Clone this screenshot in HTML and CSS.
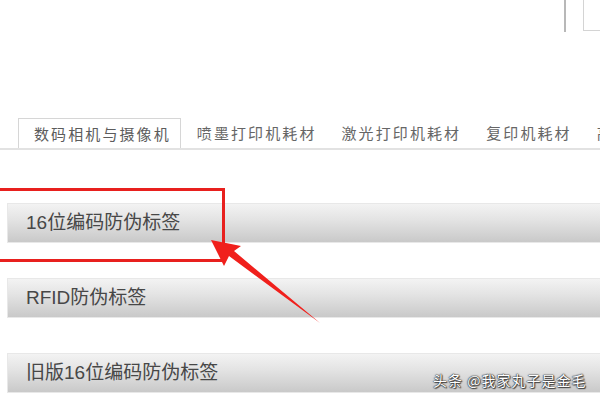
FILE: index.html
```html
<!DOCTYPE html>
<html lang="zh-CN">
<head>
    <meta charset="UTF-8">
    <meta name="viewport" content="width=device-width, initial-scale=1.0">
    <title>防伪标签</title>
    <link rel="stylesheet" href="styles.css">
</head>
<body>

    <div class="top-deco">
        <span class="deco-line"></span>
        <span class="deco-box"></span>
    </div>

    <ul class="tabs">
        <li class="tab active">数码相机与摄像机</li>
        <li class="tab">喷墨打印机耗材</li>
        <li class="tab">激光打印机耗材</li>
        <li class="tab">复印机耗材</li>
        <li class="tab">高</li>
    </ul>

    <div class="bars">
        <div class="bar">16位编码防伪标签</div>
        <div class="bar">RFID防伪标签</div>
        <div class="bar">旧版16位编码防伪标签</div>
    </div>

    <!-- 标注：红框和箭头 -->
    <div class="mark-box"></div>
    <svg class="mark-arrow" width="600" height="400" viewBox="0 0 600 400">
        <polygon points="211,240 241,246 234,251 320,323 229,256 224,266" fill="#f0201c"/>
    </svg>

    <div class="watermark">头条 @我家丸子是金毛</div>

</body>
</html>
```

FILE: styles.css
```css
body {
    margin: 0;
    padding: 0;
    width: 600px;
    height: 400px;
    overflow: hidden;
    position: relative;
    background-color: #fff;
    font-family: 'Noto Sans CJK SC', 'Noto Sans', sans-serif;
}
.top-deco {
    height: 118px;
    display: flex;
    justify-content: flex-end;
    align-items: flex-start;
}
.deco-line {
    width: 0;
    height: 32px;
    border-left: 2px solid #b8b8b8;
    margin-right: 17px;
}
.deco-box {
    width: 16px;
    height: 30px;
    border-left: 1px solid #d4d4d4;
    border-bottom: 1px solid #d4d4d4;
}
.tabs {
    list-style: none;
    margin: 0;
    padding: 0 0 0 18px;
    display: flex;
    height: 30px;
    border-bottom: 2px solid #e2e2e2;
    white-space: nowrap;
    overflow: hidden;
}
.tab {
    flex-shrink: 0;
    padding: 0 9px 0 16px;
    font-size: 15px;
    letter-spacing: 2.1px;
    line-height: 30px;
    color: #666;
}
.tab.active {
    border: 1px solid #d6d6d6;
    border-bottom: none;
    line-height: 29px;
    padding-left: 15px;
    background-color: #fff;
    height: 31px;
    box-sizing: border-box;
    color: #5c5c5c;
}
.bars {
    padding-top: 53px;
    margin-left: 7px;
    margin-right: -10px;
}
.bar {
    height: 40px;
    box-sizing: border-box;
    margin-bottom: 35px;
    padding-left: 18px;
    font-family: 'Liberation Sans', 'Noto Sans CJK SC', sans-serif;
    font-size: 19px;
    line-height: 38px;
    color: #474747;
    border: 1px solid #e8e8e8;
    background: linear-gradient(#f3f3f3, #e4e4e4 40%, #c9c9c9);
}
.mark-box {
    position: absolute;
    left: -4px;
    top: 188px;
    width: 223px;
    height: 68px;
    border: 3px solid #e8201e;
}
.mark-arrow {
    position: absolute;
    left: 0;
    top: 0;
}
.watermark {
    position: absolute;
    left: 433px;
    top: 370px;
    font-size: 14px;
    letter-spacing: 1px;
    line-height: 20px;
    color: #fff;
    text-shadow: 0 0 1px #333, 0 0 1px #333, 0 0 2px #444, 1px 1px 1px #444;
}
```
